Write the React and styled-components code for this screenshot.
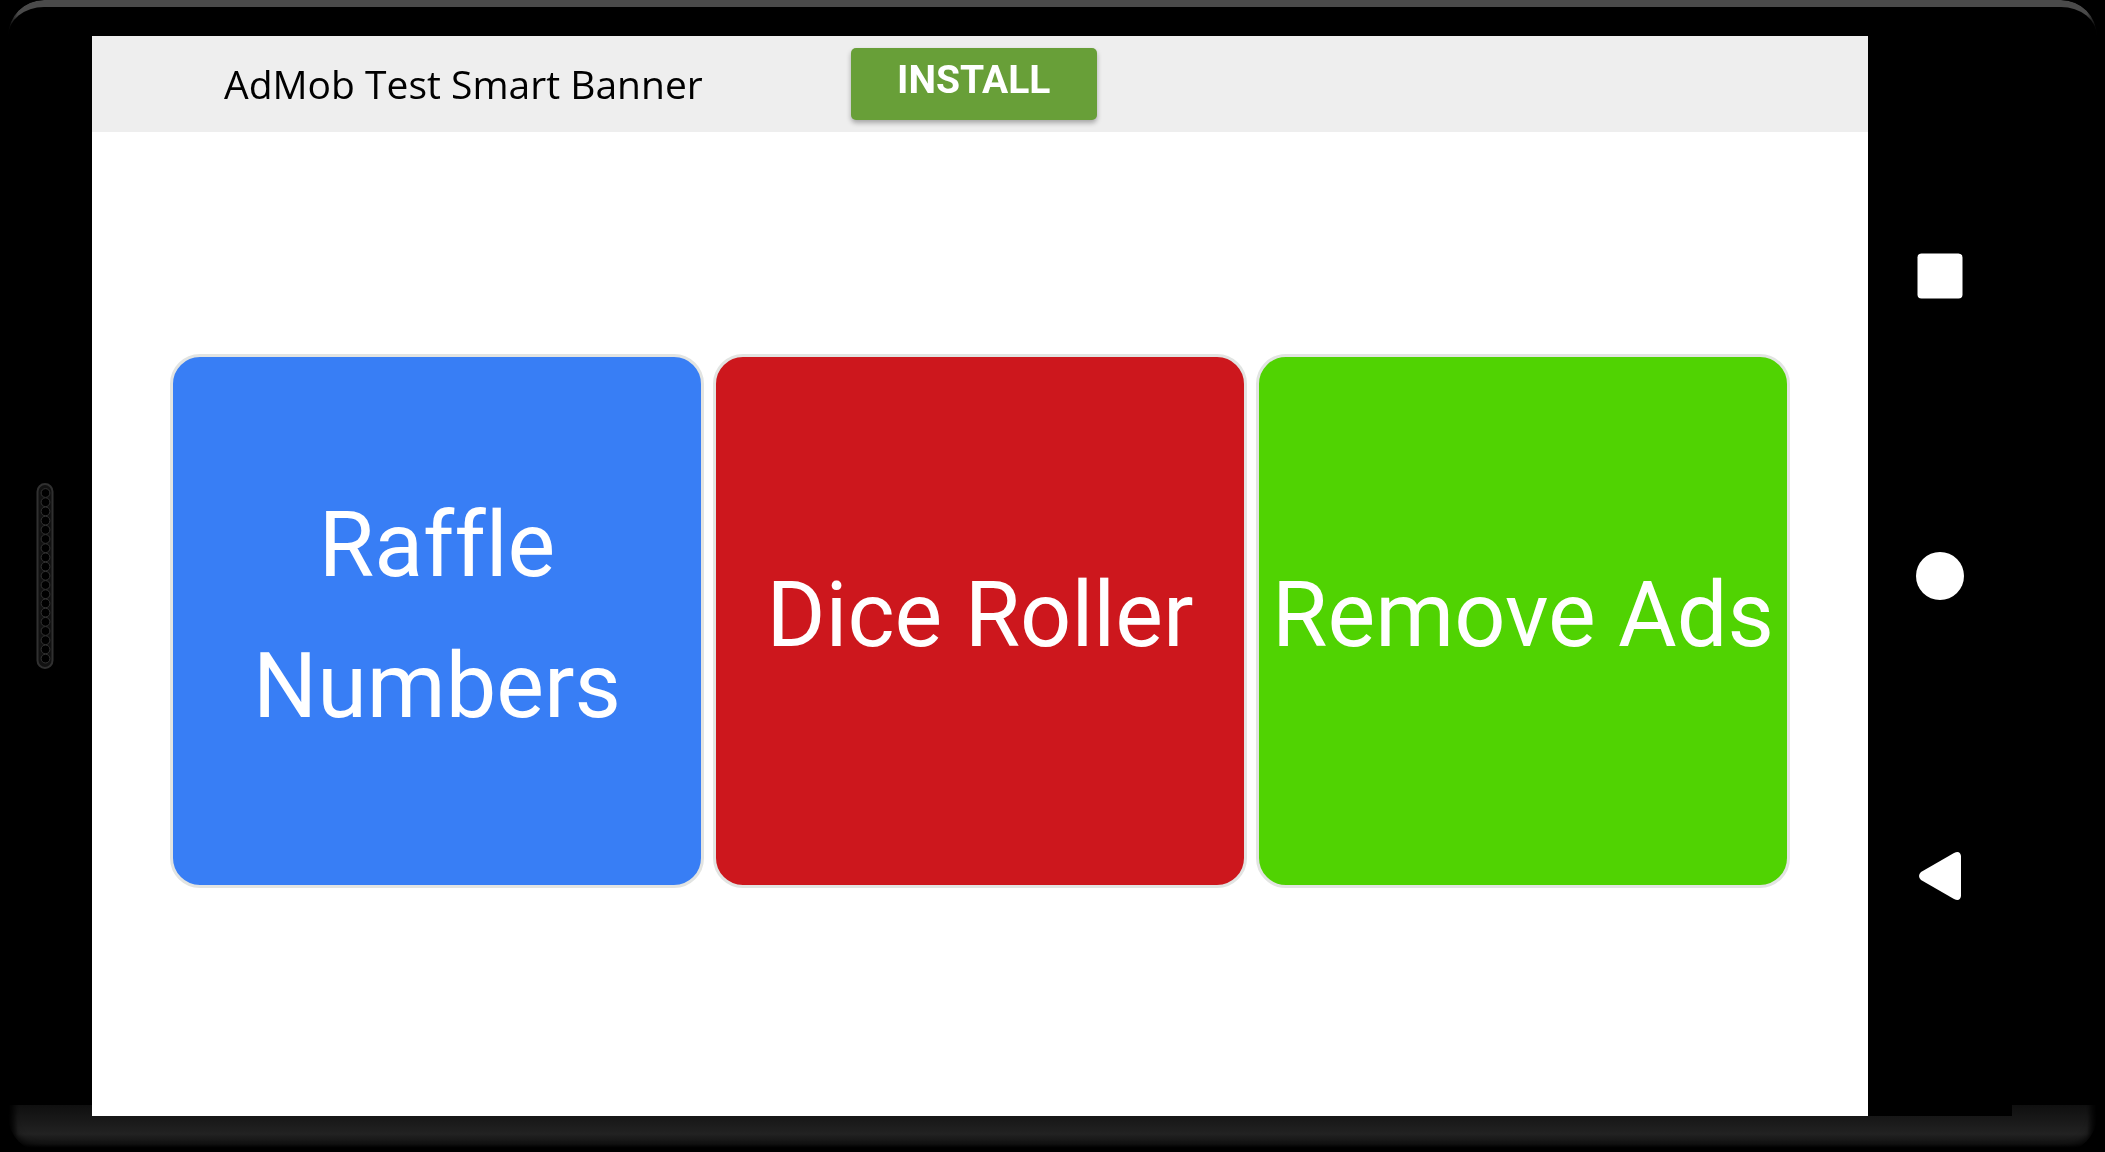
import React from 'react';
import styled, { createGlobalStyle } from 'styled-components';

const GlobalStyle = createGlobalStyle`
    *{
        box-sizing: border-box;
    }

    body{
        margin: 0;
        background: #000;
        font-family: Roboto, sans-serif;
    }
`;

const Device = styled.div`
    display: flex;
    min-height: 100vh;
    margin: 0 8px;
    padding-top: 29px;
    padding-bottom: 36px;
    border-top: 7px solid #4a4a4a;
    border-radius: 36px;
    background: linear-gradient(#0f0f0f, #161616 11px, #222 29px, #111 39px, #000 43px)
        bottom / 100% 47px no-repeat #000;
    box-shadow: inset 0 0 8px 1px #000;
    mask-image: linear-gradient(to right, transparent, #000 10px calc(100% - 10px), transparent);
`;

const Bezel = styled.div`
    flex: none;
    display: flex;
    align-items: center;
    padding-left: 28px;
    width: ${({ $width }) => $width}px;
`;

const Screen = styled.div`
    flex: 1;
    display: flex;
    flex-direction: column;
    background: #fff;
`;

const Banner = styled.header`
    display: flex;
    align-items: center;
    gap: 148px;
    height: 96px;
    padding-left: 132px;
    background: #eee;
    color: #000;
    font-family: 'Open Sans', sans-serif;
    font-size: 39px;

    span{
        padding-bottom: 2px;
    }
`;

const InstallButton = styled.button`
    width: 246px;
    height: 72px;
    padding: 0 0 9px;
    border: 0;
    border-radius: 5px;
    background: #689f38;
    box-shadow: 0 3px 5px rgba(0, 0, 0, .3);
    color: #fff;
    font-family: Roboto, sans-serif;
    font-size: 39px;
    font-weight: bold;
`;

const Menu = styled.main`
    flex: 1;
    display: flex;
    align-items: center;
    gap: 9px;
    padding: 0 78px 6px;
`;

const Tile = styled.button`
    flex: 1 1 0;
    min-width: 0;
    aspect-ratio: 1;
    padding: 0 0 11px;
    border: 3px solid #e2e4e2;
    border-radius: 30px;
    background: ${({ $color }) => $color};
    color: #fff;
    font-family: inherit;
    font-size: 90px;
    font-variant-ligatures: none;
    line-height: 141px;
`;

const NavBar = styled.nav`
    flex: none;
    display: flex;
    flex-direction: column;
    align-items: center;
    justify-content: center;
    gap: 252px;
    width: 144px;
    background: #000;
`;

const NavButton = styled.button`
    display: block;
    width: 48px;
    height: 48px;
    padding: 0;
    border: 0;
    background: none;

    svg{
        display: block;
        fill: #fff;
    }
`;

const tiles = [
  { label: 'Raffle Numbers', color: '#387ef5' },
  { label: 'Dice Roller', color: '#cd171d' },
  { label: 'Remove Ads', color: '#50d302' },
];

function Speaker() {
  return (
    <svg width="18" height="186" viewBox="0 0 18 186">
      <rect x="1.5" y="1" width="15" height="184" rx="7.5" fill="#111" stroke="#303030" strokeWidth="2" />
      {Array.from({ length: 19 }, (_, i) => (
        <circle key={i} cx="9.5" cy={10 + i * 9.2} r="4.4" fill="#000" stroke="#333" />
      ))}
    </svg>
  );
}

function App() {
  return (
    <>
      <GlobalStyle />
      <Device>
        <Bezel $width={84}>
          <Speaker />
        </Bezel>
        <Screen>
          <Banner>
            <span>AdMob Test Smart Banner</span>
            <InstallButton>INSTALL</InstallButton>
          </Banner>
          <Menu>
            {tiles.map(({ label, color }) => (
              <Tile key={label} $color={color}>{label}</Tile>
            ))}
          </Menu>
        </Screen>
        <NavBar>
          <NavButton aria-label="Recent apps">
            <svg width="48" height="48"><rect x="1.5" y="1.5" width="45" height="45" rx="4" /></svg>
          </NavButton>
          <NavButton aria-label="Home">
            <svg width="48" height="48"><circle cx="24" cy="24" r="24" /></svg>
          </NavButton>
          <NavButton aria-label="Back">
            <svg width="48" height="48">
              <path d="M38 1Q44-2 45 4V44Q44 50 38 47L5 28Q1 24 5 20Z" />
            </svg>
          </NavButton>
        </NavBar>
        <Bezel $width={85} />
      </Device>
    </>
  );
}

export default App;
